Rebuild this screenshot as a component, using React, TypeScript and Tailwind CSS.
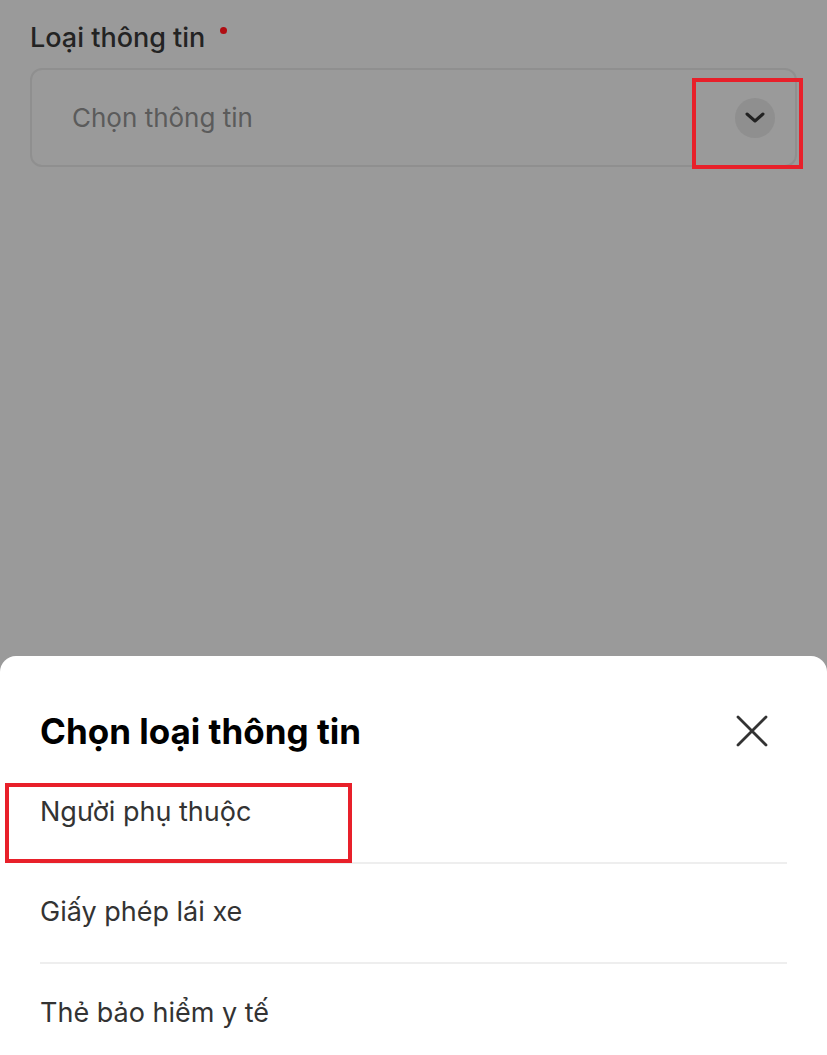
import React from "react";

const font = { fontFamily: "Inter, Roboto, 'Noto Sans', sans-serif" };

export default function App() {
  const items = ["Người phụ thuộc", "Giấy phép lái xe", "Thẻ bảo hiểm y tế"];
  return (
    <div className="relative h-[1055px] w-[827px] overflow-hidden bg-[#9a9a9a]" style={font}>
      <div className="px-[30px] pt-[20px]">
        <div className="flex items-start">
          <span className="text-[27px] leading-[36px] font-medium text-[#232323]">Loại thông tin</span>
          <span className="ml-[15px] mt-[7px] h-[7px] w-[7px] rounded-full bg-[#b00d12]" />
        </div>
        <div className="mt-[12px] flex h-[99px] items-center justify-between rounded-[12px] border-2 border-[#8f8f8f] pl-[40px] pr-[20px]">
          <span className="text-[26px] text-[#5b5b5b]">Chọn thông tin</span>
          <span className="flex h-[40px] w-[40px] items-center justify-center rounded-full bg-[#8f8f8f]">
            <svg width="22" height="13" viewBox="0 0 22 13" fill="none" stroke="#222" strokeWidth="3" strokeLinecap="round" strokeLinejoin="round">
              <path d="M3 3l8 7 8-7" />
            </svg>
          </span>
        </div>
      </div>

      <div className="absolute left-[692px] top-[78px] h-[91px] w-[111px] border-[4px] border-[#e8202a]" />

      <div className="absolute bottom-0 left-0 right-0 h-[399px] rounded-t-[16px] bg-white">
        <div className="flex items-center justify-between pl-[40px] pr-[58px] pt-[53px]">
          <span className="text-[35px] font-bold leading-[44px] text-black">Chọn loại thông tin</span>
          <svg width="34" height="34" viewBox="0 0 34 34" stroke="#333" strokeWidth="2.8" strokeLinecap="round">
            <path d="M3 3l28 28M31 3L3 31" />
          </svg>
        </div>
        <div className="mx-[40px] mt-[11px]">
          {items.map((t, i) => (
            <div
              key={t}
              className={`flex h-[100px] items-center pb-[2px] ${i < items.length - 1 ? "border-b-2 border-[#eeeeee]" : ""}`}
            >
              <span className="text-[27px] text-[#333333]">{t}</span>
            </div>
          ))}
        </div>
      </div>

      <div className="absolute left-[5px] top-[783px] h-[80px] w-[347px] border-[4px] border-[#e8202a]" />
    </div>
  );
}
